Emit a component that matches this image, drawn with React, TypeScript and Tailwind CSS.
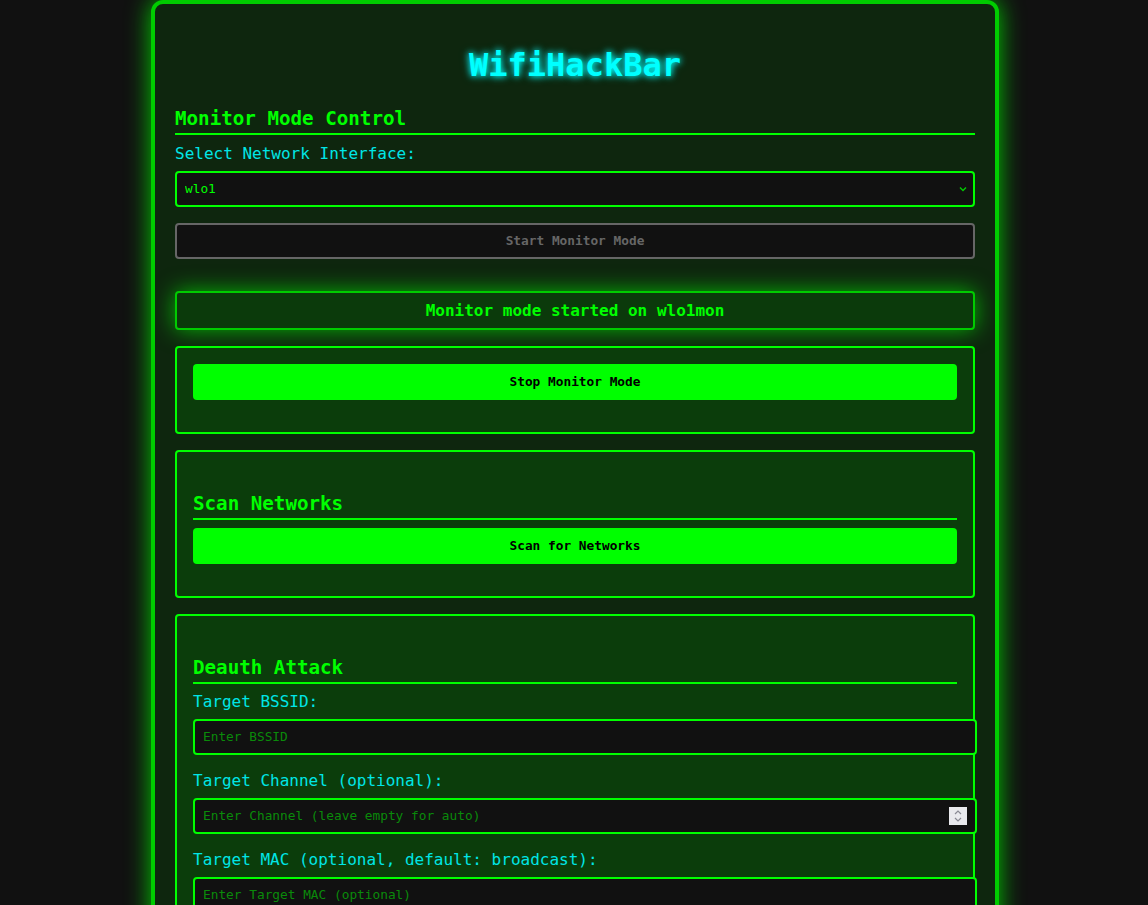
import React from "react";

const mono = { fontFamily: '"DejaVu Sans Mono", "Liberation Mono", monospace' };

function H2({ children }: { children: React.ReactNode }) {
  return (
    <h2 className="text-[19.2px] leading-[22px] font-bold text-[#00ff00] pt-[1px] pb-[3px] border-b-2 border-[#00ff00]">
      {children}
    </h2>
  );
}

function Label({ children, className = "" }: { children: React.ReactNode; className?: string }) {
  return <div className={`text-[16px] leading-[19px] text-[#00e6e6] ${className}`}>{children}</div>;
}

function Input({ placeholder, spinner = false }: { placeholder: string; spinner?: boolean }) {
  return (
    <div className="relative mt-[8px]">
      <input
        type="text"
        placeholder={placeholder}
        className="block box-content w-full h-[16px] py-[8px] px-[8px] bg-[#111111] border-2 border-[#00ff00] rounded-[4px] text-[12.8px] text-[#00ff00] placeholder:text-[#0a8a0a] outline-none"
        style={mono}
      />
      {spinner && (
        <div className="absolute right-[-10px] top-[9px] w-[18px] h-[18px] bg-[#e9e9ed] flex items-center justify-center">
          <svg width="10" height="14" viewBox="0 0 10 14" fill="none">
            <polyline points="2,5 5,2 8,5" stroke="#8a8a94" strokeWidth="1.2" />
            <polyline points="2,9 5,12 8,9" stroke="#8a8a94" strokeWidth="1.2" />
          </svg>
        </div>
      )}
    </div>
  );
}

export default function App() {
  return (
    <div className="min-h-screen bg-[#111111] pl-[2px]" style={mono}>
      <div className="mx-auto w-[848px] border-4 border-[#00cc00] rounded-[12px] bg-[#0e260e] px-[20px] pt-[20px] pb-[40px] shadow-[0_0_25px_#00cc00]">
        <h1
          className="mt-[23px] text-center text-[32px] leading-[37px] font-bold text-[#00ffff]"
          style={{ textShadow: "0 0 6px #00ffff, 0 0 10px rgba(0,255,255,0.6)" }}
        >
          WifiHackBar
        </h1>
        <div className="mt-[23px]">
          <H2>Monitor Mode Control</H2>
        </div>
        <Label className="mt-[9px]">Select Network Interface:</Label>
        <div className="relative mt-[8px]">
          <select
            className="appearance-none block w-full h-[36px] px-[8px] bg-[#111111] border-2 border-[#00ff00] rounded-[4px] text-[12.8px] text-[#00ff00] outline-none"
            style={mono}
            defaultValue="wlo1"
          >
            <option value="wlo1">wlo1</option>
          </select>
          <svg
            className="absolute right-[8px] top-[15px]"
            width="8"
            height="6"
            viewBox="0 0 8 6"
            fill="none"
          >
            <polyline points="1,1.5 4,4.5 7,1.5" stroke="#00cc00" strokeWidth="1.4" />
          </svg>
        </div>
        <button
          className="mt-[16px] block w-full h-[36px] bg-[#111111] border-2 border-[#666666] rounded-[4px] text-[12.8px] font-bold text-[#666666]"
          style={mono}
        >
          Start Monitor Mode
        </button>

        <div className="mt-[32px] h-[39px] flex items-center justify-center border-2 border-[#00cc00] rounded-[4px] bg-[#0b3a0b] text-[16px] font-bold text-[#00ff00] shadow-[0_0_22px_rgba(0,255,0,0.65)]">
          Monitor mode started on wlo1mon
        </div>

        <div className="mt-[16px] border-2 border-[#00ff00] rounded-[4px] bg-[#0b3d0b] p-[16px]">
          <button
            className="block w-full h-[36px] bg-[#00ff00] rounded-[4px] text-[12.8px] font-bold text-black mb-[16px]"
            style={mono}
          >
            Stop Monitor Mode
          </button>
        </div>

        <div className="mt-[16px] border-2 border-[#00ff00] rounded-[4px] bg-[#0b3d0b] p-[16px]">
          <div className="mt-[24px]">
            <H2>Scan Networks</H2>
          </div>
          <button
            className="mt-[8px] block w-full h-[36px] bg-[#00ff00] rounded-[4px] text-[12.8px] font-bold text-black mb-[16px]"
            style={mono}
          >
            Scan for Networks
          </button>
        </div>

        <div className="mt-[16px] border-2 border-[#00ff00] rounded-[4px] bg-[#0b3d0b] p-[16px]">
          <div className="mt-[24px]">
            <H2>Deauth Attack</H2>
          </div>
          <Label className="mt-[8px]">Target BSSID:</Label>
          <Input placeholder="Enter BSSID" />
          <Label className="mt-[16px]">Target Channel (optional):</Label>
          <Input placeholder="Enter Channel (leave empty for auto)" spinner />
          <Label className="mt-[16px]">Target MAC (optional, default: broadcast):</Label>
          <Input placeholder="Enter Target MAC (optional)" />
          <div className="h-[60px]" />
        </div>
      </div>
    </div>
  );
}
